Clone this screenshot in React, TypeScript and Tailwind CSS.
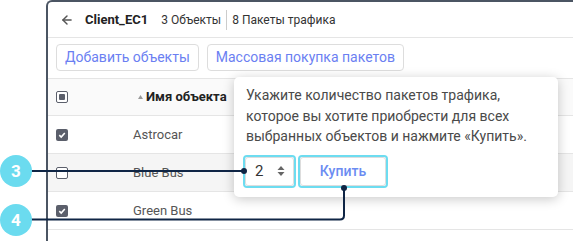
import { ArrowLeft } from "lucide-react";

const rows = [
  { name: "Astrocar", checked: true, muted: false },
  { name: "Blue Bus", checked: false, muted: true },
  { name: "Green Bus", checked: true, muted: false },
];

function Check({ checked }: { checked: boolean }) {
  if (checked) {
    return (
      <span className="flex h-[12px] w-[12px] items-center justify-center rounded-[2px] bg-[#5b5f6b]">
        <svg width="8" height="8" viewBox="0 0 8 8">
          <path d="M1.3 4.2 3.2 6 6.8 2" fill="none" stroke="#fff" strokeWidth="1.6" />
        </svg>
      </span>
    );
  }
  return <span className="block h-[12px] w-[12px] rounded-[2px] border border-[#5b5f6b] bg-white" />;
}

function Callouts() {
  return (
    <svg className="pointer-events-none absolute left-0 top-0" width="573" height="241">
      <path d="M30 171 H244" stroke="#0f2545" strokeWidth="2" fill="none" />
      <circle cx="244" cy="171" r="3" fill="#0f2545" />
      <path d="M30 219.5 H340 Q344 219.5 344 215.5 V188" stroke="#0f2545" strokeWidth="2" fill="none" />
      <circle cx="344" cy="188" r="3" fill="#0f2545" />
      <circle cx="16" cy="171" r="16" fill="#6bdbef" />
      <circle cx="16" cy="220" r="16" fill="#6bdbef" />
      <text x="16" y="177" textAnchor="middle" fill="#fff" fontFamily="Roboto, sans-serif" fontWeight="700" fontSize="17">3</text>
      <text x="16" y="226" textAnchor="middle" fill="#fff" fontFamily="Roboto, sans-serif" fontWeight="700" fontSize="17">4</text>
    </svg>
  );
}

export default function App() {
  return (
    <div className="relative h-[241px] w-[573px] overflow-hidden bg-white font-['Roboto',sans-serif]">
      <div className="ml-[46px] h-full rounded-tl-[6px] border-l-2 border-t-2 border-[#4b5563]">
        <div className="flex h-[36px] items-center border-b border-[#e5e5e5] pl-[12px]">
          <ArrowLeft size={14} strokeWidth={2.5} className="text-[#555]" />
          <span className="ml-[11px] text-[13px] font-bold text-[#222]">Client_EC1</span>
          <span className="ml-[13px] text-[12px] text-[#333]">3 Объекты</span>
          <span className="mx-[5px] h-[20px] w-px bg-[#ccc]" />
          <span className="text-[12px] text-[#333]">8 Пакеты трафика</span>
        </div>
        <div className="flex h-[41px] gap-[8px] border-b border-[#e5e5e5] pl-[8px] pt-[6px]">
          <button className="h-[27px] rounded-[4px] border border-[#ddd] px-[8px] text-[14px] text-[#6b7ff2]">
            Добавить объекты
          </button>
          <button className="h-[27px] rounded-[4px] border border-[#ddd] px-[8px] text-[14px] text-[#6b7ff2]">
            Массовая покупка пакетов
          </button>
        </div>
        <div className="flex h-[37px] items-center border-b border-[#e5e5e5] bg-[#fafafa]">
          <div className="w-[85px] pl-[8px]">
            <span className="flex h-[12px] w-[12px] items-center justify-center rounded-[2px] border border-[#5b5f6b] bg-white">
              <span className="h-[6px] w-[6px] rounded-[1px] bg-[#5b5f6b]" />
            </span>
          </div>
          <svg className="ml-[5px]" width="5" height="4" viewBox="0 0 5 4">
            <path d="M2.5 0 5 4H0Z" fill="#999" />
          </svg>
          <span className="ml-[3px] text-[13px] font-bold text-[#222]">Имя объекта</span>
        </div>
        {rows.map((r) => (
          <div
            key={r.name}
            className={`flex h-[38px] items-center border-b border-[#e5e5e5] ${r.muted ? "bg-[#f5f5f5]" : "bg-white"}`}
          >
            <div className="w-[85px] pl-[8px]">
              <Check checked={r.checked} />
            </div>
            <span className="text-[13px] text-[#555]">{r.name}</span>
          </div>
        ))}
      </div>

      <div className="absolute left-[234px] top-[77px] h-[120px] w-[324px] rounded-[5px] bg-white px-[12px] pt-[8px] shadow-[0_2px_12px_rgba(0,0,0,0.22)]">
        <p className="text-[14px] leading-[20.5px] text-[#4a4a4a]">
          Укажите количество пакетов трафика, которое вы хотите приобрести для всех выбранных объектов и нажмите «Купить».
        </p>
        <div className="mt-[8px] flex gap-[2px] -ml-[3px]">
          <div className="h-[33px] w-[53px] rounded-[4px] border-2 border-[#6ddcf0]">
            <div className="flex h-full items-center justify-between rounded-[3px] border border-[#ddd] pl-[9px] pr-[8px] text-[15px] text-[#333]">
              <span>2</span>
              <svg width="8" height="12" viewBox="0 0 8 12">
                <path d="M4 1 7.5 5H0.5Z M4 11 7.5 7H0.5Z" fill="#666" />
              </svg>
            </div>
          </div>
          <div className="h-[33px] w-[90px] rounded-[4px] border-2 border-[#6ddcf0]">
            <div className="flex h-full items-center justify-center rounded-[3px] border border-[#ddd] text-[14px] font-medium text-[#6b8cf2]">
              Купить
            </div>
          </div>
        </div>
      </div>

      <Callouts />
    </div>
  );
}
